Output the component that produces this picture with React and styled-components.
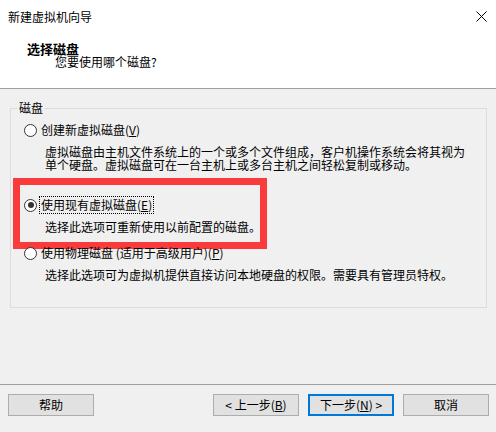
import React from "react";
import styled, { createGlobalStyle } from "styled-components";

const GlobalStyle = createGlobalStyle`
  html, body { margin: 0; padding: 0; background: #f0f0f0; }
  body {
    font-family: "Noto Sans CJK SC", "Microsoft YaHei", sans-serif;
    font-size: 12px;
    color: #000;
  }
`;

const Window = styled.div`
  width: 496px;
  height: 432px;
  display: flex;
  flex-direction: column;
  background: #f0f0f0;
  overflow: hidden;
`;

const Header = styled.div`
  height: 88px;
  background: #fff;
  border-bottom: 1px solid #a0a0a0;
  display: flex;
  flex-direction: column;
`;

const TitleBar = styled.div`
  height: 33px;
  display: flex;
  align-items: center;
  justify-content: space-between;
  padding: 0 9px 0 8px;
  line-height: 14px;
`;

const CloseBtn = styled.span`
  display: flex;
  width: 11px;
  height: 11px;
`;

const HeaderTitle = styled.div`
  margin: 9px 0 0 27px;
  font-weight: bold;
  font-size: 13px;
  line-height: 13px;
`;

const HeaderSub = styled.div`
  margin: 0 0 0 55px;
  line-height: 14px;
`;

const Body = styled.div`
  flex: 1;
  padding: 12px 9px 0 10px;
`;

const Group = styled.fieldset`
  margin: 0;
  padding: 6px 0 26px 0;
  border: 1px solid #dcdcdc;
  min-width: 0;
`;

const Legend = styled.legend`
  margin-left: 6px;
  padding: 0 2px;
  line-height: 14px;
`;

const OptionBlock = styled.div`
  position: relative;
  margin-top: ${(p) => p.$top || 0}px;
`;

const OptionRow = styled.div`
  height: 18px;
  display: flex;
  align-items: center;
  padding-left: 13px;
`;

const Radio = styled.span`
  width: 11px;
  height: 11px;
  border: 1px solid #333;
  border-radius: 50%;
  background: #fff;
  display: flex;
  align-items: center;
  justify-content: center;
  margin-right: 2px;
  flex: none;
  &::after {
    content: "";
    width: 6px;
    height: 6px;
    border-radius: 50%;
    background: ${(p) => (p.$checked ? "#333" : "transparent")};
  }
`;

const Label = styled.span`
  line-height: 16px;
  padding: 0 1px;
  border: 1px ${(p) => (p.$focus ? "dotted #000" : "solid transparent")};
  white-space: nowrap;
`;

const Key = styled.span`
  text-decoration: underline;
`;

const Desc = styled.div`
  margin-top: 6px;
  padding-left: 34px;
  line-height: 13px;
  white-space: pre-line;
`;

const Highlight = styled.div`
  position: absolute;
  left: 2px;
  top: -18px;
  width: 254px;
  height: 71px;
  box-sizing: border-box;
  border: 7px solid #fa3b3b;
  pointer-events: none;
`;

const Footer = styled.div`
  height: 38px;
  border-top: 1px solid #a0a0a0;
  display: flex;
  justify-content: space-between;
  align-items: flex-start;
  padding: 9px 7px 0 8px;
`;

const ButtonGroup = styled.div`
  display: flex;
  gap: 9px;
`;

const Button = styled.button`
  width: 86px;
  height: 22px;
  box-sizing: border-box;
  background: #e1e1e1;
  border: ${(p) => (p.$default ? "2px solid #0078d7" : "1px solid #adadad")};
  font-family: inherit;
  font-size: 12px;
  color: #000;
  padding: 0;
  line-height: 16px;
  display: flex;
  align-items: center;
  justify-content: center;
  margin: 0;
`;

const options = [
  {
    label: "创建新虚拟磁盘",
    key: "V",
    desc: "虚拟磁盘由主机文件系统上的一个或多个文件组成，客户机操作系统会将其视为\n单个硬盘。虚拟磁盘可在一台主机上或多台主机之间轻松复制或移动。",
    top: 0,
  },
  {
    label: "使用现有虚拟磁盘",
    key: "E",
    desc: "选择此选项可重新使用以前配置的磁盘。",
    top: 25,
    checked: true,
    highlight: true,
  },
  {
    label: "使用物理磁盘 (适用于高级用户)",
    key: "P",
    desc: "选择此选项可为虚拟机提供直接访问本地硬盘的权限。需要具有管理员特权。",
    top: 11,
  },
];

export default function App() {
  return (
    <>
      <GlobalStyle />
      <Window>
        <Header>
          <TitleBar>
            <span>新建虚拟机向导</span>
            <CloseBtn>
              <svg width="11" height="11" viewBox="0 0 11 11">
                <path d="M0.5 0.5 L10.5 10.5 M10.5 0.5 L0.5 10.5" stroke="#000" strokeWidth="1" fill="none" />
              </svg>
            </CloseBtn>
          </TitleBar>
          <HeaderTitle>选择磁盘</HeaderTitle>
          <HeaderSub>您要使用哪个磁盘?</HeaderSub>
        </Header>
        <Body>
          <Group>
            <Legend>磁盘</Legend>
            {options.map((o) => (
              <OptionBlock key={o.key} $top={o.top}>
                <OptionRow>
                  <Radio $checked={o.checked} />
                  <Label $focus={o.checked}>
                    {o.label}(<Key>{o.key}</Key>)
                  </Label>
                </OptionRow>
                <Desc>{o.desc}</Desc>
                {o.highlight && <Highlight />}
              </OptionBlock>
            ))}
          </Group>
        </Body>
        <Footer>
          <Button>帮助</Button>
          <ButtonGroup>
            <Button>
              &lt; 上一步(<Key>B</Key>)
            </Button>
            <Button $default>
              下一步(<Key>N</Key>) &gt;
            </Button>
            <Button>取消</Button>
          </ButtonGroup>
        </Footer>
      </Window>
    </>
  );
}
